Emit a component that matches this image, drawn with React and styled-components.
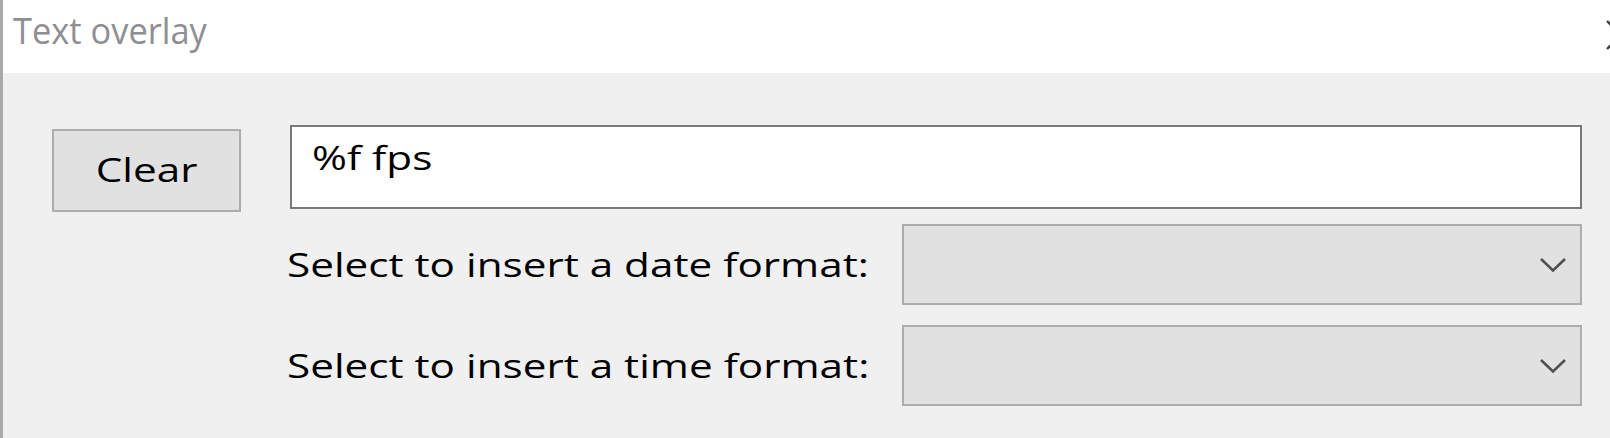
import React from 'react';
import styled, { createGlobalStyle } from 'styled-components';

const GlobalStyle = createGlobalStyle`
  body {
    margin: 0;
    background: #f0f0f0;
  }
`;

const FONT = `'Open Sans', 'Noto Sans', 'Liberation Sans', sans-serif`;

const Window = styled.div`
  position: relative;
  width: 1610px;
  height: 438px;
  box-sizing: border-box;
  display: flex;
  flex-direction: column;
  border-left: 3px solid #a9a9a9;
  background: #f0f0f0;
  overflow: hidden;
  font-family: ${FONT};

  &::before {
    content: '';
    position: absolute;
    left: -3px;
    top: 0;
    width: 3px;
    height: 52px;
    background: #4d4d4d;
  }
`;

const TitleBar = styled.div`
  height: 73px;
  flex-shrink: 0;
  box-sizing: border-box;
  display: flex;
  align-items: flex-start;
  padding: 4px 0 0 10px;
  background: #ffffff;
  overflow: hidden;
`;

const Title = styled.span`
  display: inline-block;
  font-size: 37px;
  color: #8e8e93;
  transform: scaleX(0.93);
  transform-origin: left center;
  white-space: nowrap;
`;

const CloseGlyph = styled.svg`
  margin-left: auto;
  margin-top: 16px;
  margin-right: -26px;
  flex-shrink: 0;
`;

const Content = styled.div`
  flex: 1;
  display: flex;
  align-items: flex-start;
  padding: 52px 28px 0 49px;
`;

const ClearButton = styled.div`
  width: 189px;
  height: 83px;
  margin-top: 4px;
  box-sizing: border-box;
  flex-shrink: 0;
  display: flex;
  align-items: center;
  justify-content: center;
  padding-bottom: 3px;
  border: 2px solid #adadad;
  background: #e1e1e1;
  font-size: 32px;
  color: #000;
`;

const Fields = styled.div`
  flex: 1;
  margin-left: 49px;
  display: flex;
  flex-direction: column;
`;

const TextBox = styled.div`
  height: 84px;
  box-sizing: border-box;
  padding: 9px 20px;
  border: 2px solid #7a7a7a;
  background: #ffffff;
  font-size: 32px;
  color: #000;
`;

const FormatRow = styled.div`
  display: grid;
  grid-template-columns: 612px 1fr;
  align-items: center;
  margin-top: ${({ $gap }) => $gap}px;
`;

const Label = styled.div`
  margin-left: -3px;
  font-size: 32px;
  color: #000;
  white-space: nowrap;
`;

const Combo = styled.div`
  height: 81px;
  box-sizing: border-box;
  display: flex;
  align-items: center;
  justify-content: flex-end;
  padding-right: 13px;
  border: 2px solid #adadad;
  background: #e1e1e1;
`;

const Stretch = styled.span`
  display: inline-block;
  white-space: nowrap;
  transform: scaleX(1.32);
  transform-origin: ${({ $origin }) => $origin || 'left'} center;
`;

const Chevron = () => (
  <svg width="28" height="16" viewBox="0 0 28 16">
    <polyline
      points="2,2 14,13.5 26,2"
      fill="none"
      stroke="#505050"
      strokeWidth="2.6"
    />
  </svg>
);

const formats = [
  { label: 'Select to insert a date format:', gap: 15 },
  { label: 'Select to insert a time format:', gap: 20 },
];

export default function App() {
  return (
    <>
      <GlobalStyle />
      <Window>
        <TitleBar>
          <Title>Text overlay</Title>
          <CloseGlyph width="30" height="30" viewBox="0 0 30 30">
            <path d="M1 1 L29 29 M1 29 L29 1" stroke="#3c3c3c" strokeWidth="2.4" />
          </CloseGlyph>
        </TitleBar>
        <Content>
          <ClearButton>
            <Stretch $origin="center">Clear</Stretch>
          </ClearButton>
          <Fields>
            <TextBox>
              <Stretch>%f fps</Stretch>
            </TextBox>
            {formats.map((f) => (
              <FormatRow key={f.label} $gap={f.gap}>
                <Label>
                  <Stretch>{f.label}</Stretch>
                </Label>
                <Combo>
                  <Chevron />
                </Combo>
              </FormatRow>
            ))}
          </Fields>
        </Content>
      </Window>
    </>
  );
}
